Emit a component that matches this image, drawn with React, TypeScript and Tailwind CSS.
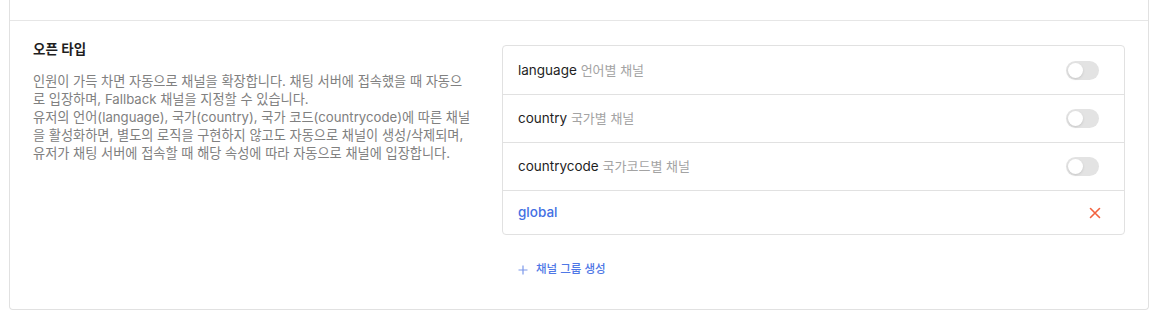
import React from "react";

const rows = [
  { key: "language", label: "언어별 채널" },
  { key: "country", label: "국가별 채널" },
  { key: "countrycode", label: "국가코드별 채널" },
];

const desc = [
  "인원이 가득 차면 자동으로 채널을 확장합니다. 채팅 서버에 접속했을 때 자동으",
  "로 입장하며, Fallback 채널을 지정할 수 있습니다.",
  "유저의 언어(language), 국가(country), 국가 코드(countrycode)에 따른 채널",
  "을 활성화하면, 별도의 로직을 구현하지 않고도 자동으로 채널이 생성/삭제되며,",
  "유저가 채팅 서버에 접속할 때 해당 속성에 따라 자동으로 채널에 입장합니다.",
];

function Toggle() {
  return (
    <div className="w-[33px] h-[19px] rounded-full bg-[#e3e3e3] p-[2px] flex items-center">
      <div className="w-[15px] h-[15px] rounded-full bg-white shadow-sm" />
    </div>
  );
}

export default function App() {
  return (
    <div
      className="bg-white h-[326px] w-[1162px] pl-[9px] pr-[13px]"
      style={{ fontFamily: "Inter, 'Noto Sans CJK KR', sans-serif" }}
    >
      <div className="border-x border-b border-[#e1e1e1] rounded-b-[4px] h-[310px] flex flex-col">
        <div className="h-[21px] border-b border-[#e6e6e6]" />
        <div className="flex pl-[23px] pr-[23px] pt-[18px]">
          <div className="w-[469px] shrink-0">
            <h3 className="text-[13.5px] leading-[20px] font-semibold text-[#1f1f1f]">오픈 타입</h3>
            <div className="mt-[13px] text-[13.2px] leading-[18px] text-[#808080]">
              {desc.map((line, i) => (
                <p key={i} className="whitespace-nowrap">{line}</p>
              ))}
            </div>
          </div>
          <div className="flex-1 mt-[6px]">
            <div className="border border-[#e1e1e1] rounded-[4px]">
              {rows.map((r, i) => (
                <div
                  key={r.key}
                  className={`${i === 0 ? "h-[49px]" : "h-[48px]"} flex items-center justify-between pl-[15px] pr-[25px] border-b border-[#e1e1e1]`}
                >
                  <div className="text-[13.5px]">
                    <span className="text-[#1f1f1f]">{r.key}</span>{" "}
                    <span className="text-[#a3a3a3] text-[13px]">{r.label}</span>
                  </div>
                  <Toggle />
                </div>
              ))}
              <div className="h-[43px] flex items-center justify-between pl-[15px] pr-[23px]">
                <span className="text-[13.5px] font-medium text-[#4470e3]">global</span>
                <svg width="12" height="12" viewBox="0 0 12 12" fill="none">
                  <path d="M1.5 1.5L10.5 10.5M10.5 1.5L1.5 10.5" stroke="#f2623f" strokeWidth="1.6" strokeLinecap="round" />
                </svg>
              </div>
            </div>
            <button className="mt-[26px] ml-[16px] flex items-center gap-[8px] text-[11.5px] font-medium text-[#4f78e6]">
              <svg width="10" height="10" viewBox="0 0 10 10" fill="none">
                <path d="M5 0.5V9.5M0.5 5H9.5" stroke="#7c98ea" strokeWidth="1.2" />
              </svg>
              채널 그룹 생성
            </button>
          </div>
        </div>
      </div>
    </div>
  );
}
